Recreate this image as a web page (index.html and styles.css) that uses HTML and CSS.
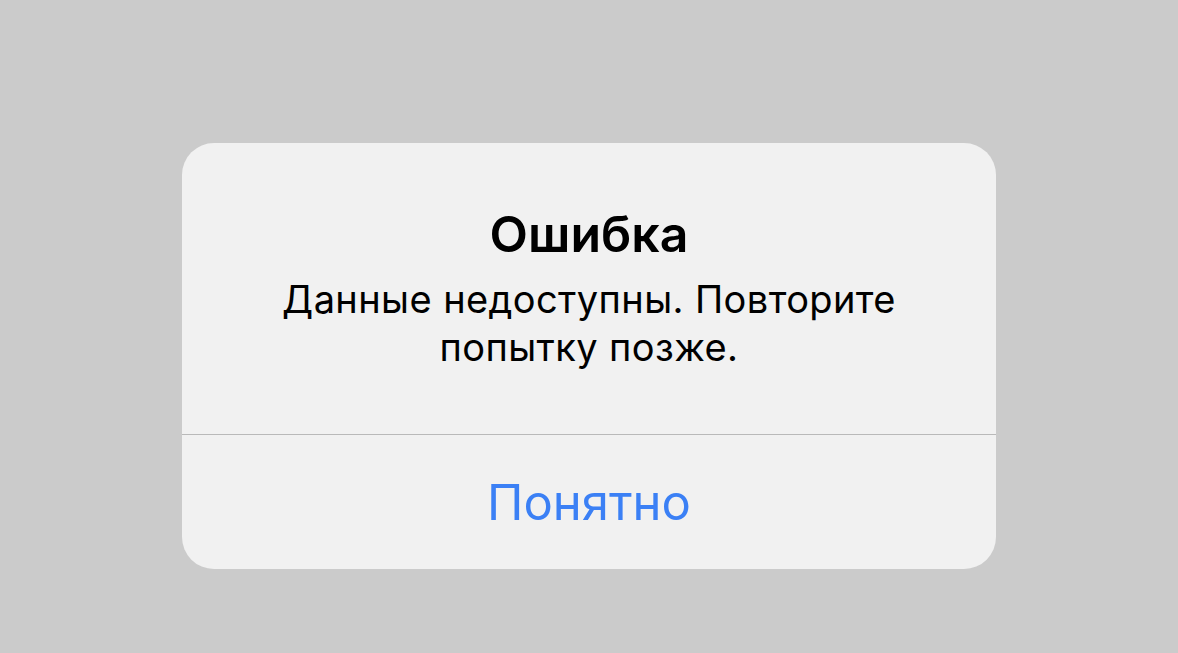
FILE: index.html
```html
<!DOCTYPE html>
<html lang="ru">
<head>
  <meta charset="UTF-8" />
  <meta name="viewport" content="width=device-width, initial-scale=1.0"/>
  <title>Ошибка</title>
  <link rel="stylesheet" href="styles.css">
</head>
<body>
  <div class="overlay">
    <div class="alert">
      <div class="alert-body">
        <div class="alert-title">Ошибка</div>
        <div class="alert-message">Данные недоступны. Повторите попытку позже.</div>
      </div>
      <button class="alert-btn">Понятно</button>
    </div>
  </div>
</body>
</html>
```

FILE: styles.css
```css
:root {
  --bg: #cbcbcb;
  --card: #f1f1f1;
  --text: #000;
  --line: #b9b9b9;
  --accent: #3b80f5;
}

* { margin: 0; padding: 0; box-sizing: border-box; }

body {
  font-family: Inter, 'Noto Sans', sans-serif;
  background-color: var(--bg);
  color: var(--text);
  height: 100vh;
  overflow: hidden;
}

.overlay {
  display: flex;
  justify-content: center;
  padding-top: 143px;
}

.alert {
  width: 814px;
  background: var(--card);
  border-radius: 32px;
  display: flex;
  flex-direction: column;
  overflow: hidden;
}

.alert-body {
  padding: 63px 50px 63px;
  border-bottom: 1px solid var(--line);
  text-align: center;
  display: flex;
  flex-direction: column;
  gap: 13px;
}

.alert-title {
  font-size: 50px;
  line-height: 56px;
  font-weight: 600;
}

.alert-message {
  font-size: 38px;
  line-height: 48px;
  letter-spacing: 0.4px;
  padding: 0 40px;
}

.alert-btn {
  height: 134px;
  border: none;
  background: none;
  color: var(--accent);
  font-family: inherit;
  font-size: 49px;
  cursor: pointer;
}
```
